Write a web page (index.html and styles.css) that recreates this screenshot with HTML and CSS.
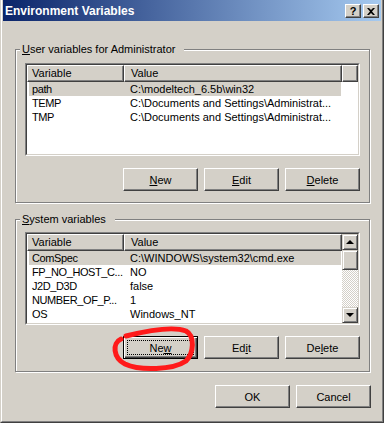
FILE: index.html
```html
<!DOCTYPE html>
<html lang="en">
<head>
    <meta charset="UTF-8">
    <title>Environment Variables</title>
    <link rel="stylesheet" href="styles.css">
</head>
<body>
    <div class="window">
        <div class="frame">
            <div class="titlebar">
                <span class="title">Environment Variables</span>
                <div class="caption-buttons">
                    <div class="cap-btn help">?</div>
                    <div class="cap-btn close">
                        <svg width="8" height="7" viewBox="0 0 8 7"><path d="M0 0h2l2 2 2-2h2l-3 3.5 3 3.5h-2l-2-2-2 2h-2l3-3.5z" fill="#000"/></svg>
                    </div>
                </div>
            </div>

            <div class="client">
                <div class="group group-user">
                    <span class="group-label"><u>U</u>ser variables for Administrator</span>
                    <div class="list">
                        <div class="list-inner">
                            <div class="table">
                                <div class="header">
                                    <div class="hcell col-var">Variable</div>
                                    <div class="hcell col-val">Value</div>
                                    <div class="hcell filler"></div>
                                </div>
                                <div class="row selected"><span class="cell-var">path</span><span class="cell-val">C:\modeltech_6.5b\win32</span></div>
                                <div class="row"><span class="cell-var">TEMP</span><span class="cell-val">C:\Documents and Settings\Administrat...</span></div>
                                <div class="row"><span class="cell-var">TMP</span><span class="cell-val">C:\Documents and Settings\Administrat...</span></div>
                            </div>
                        </div>
                    </div>
                    <div class="buttons">
                        <button class="btn"><u>N</u>ew</button>
                        <button class="btn"><u>E</u>dit</button>
                        <button class="btn"><u>D</u>elete</button>
                    </div>
                </div>

                <div class="group group-system">
                    <span class="group-label"><u>S</u>ystem variables</span>
                    <div class="list">
                        <div class="list-inner">
                            <div class="table">
                                <div class="header">
                                    <div class="hcell col-var">Variable</div>
                                    <div class="hcell col-val">Value</div>
                                </div>
                                <div class="row selected"><span class="cell-var">ComSpec</span><span class="cell-val">C:\WINDOWS\system32\cmd.exe</span></div>
                                <div class="row"><span class="cell-var">FP_NO_HOST_C...</span><span class="cell-val">NO</span></div>
                                <div class="row"><span class="cell-var">J2D_D3D</span><span class="cell-val">false</span></div>
                                <div class="row"><span class="cell-var">NUMBER_OF_P...</span><span class="cell-val">1</span></div>
                                <div class="row"><span class="cell-var">OS</span><span class="cell-val">Windows_NT</span></div>
                                <div class="row"><span class="cell-var">Path</span><span class="cell-val">C:\WINDOWS\system32;C:\WINDOWS;C:\...</span></div>
                            </div>
                            <div class="scrollbar">
                                <div class="sb-btn"><span class="arrow-up"></span></div>
                                <div class="sb-thumb"></div>
                                <div class="sb-track"></div>
                                <div class="sb-btn"><span class="arrow-down"></span></div>
                            </div>
                        </div>
                    </div>
                    <div class="buttons">
                        <button class="btn default"><span class="focus">Ne<u>w</u></span></button>
                        <button class="btn">Ed<u>i</u>t</button>
                        <button class="btn">De<u>l</u>ete</button>
                    </div>
                </div>

                <div class="footer">
                    <button class="btn">OK</button>
                    <button class="btn">Cancel</button>
                </div>
            </div>
        </div>
    </div>

    <!-- red marker drawn around the New button -->
    <svg class="annotation" width="384" height="423" viewBox="0 0 384 423">
        <path d="M126 336 C146 331 173 326 186 331 C195 336 194 353 186 361 C173 370 140 371 125 364 C113 358 112 343 121 339" fill="none" stroke="#ff1a1a" stroke-width="5" stroke-linecap="round"/>
    </svg>
</body>
</html>
```

FILE: styles.css
```css
body {
    margin: 0;
    width: 384px;
    height: 423px;
    overflow: hidden;
    background-color: #d4d0c8;
    font-family: "Liberation Sans", Arial, sans-serif;
    font-size: 11px;
    color: #000;
}

.window {
    height: 423px;
    box-sizing: border-box;
    border-left: 1px solid #d4d0c8;
    border-right: 1px solid #404040;
    border-bottom: 1px solid #404040;
}

.frame {
    height: 100%;
    box-sizing: border-box;
    border-left: 1px solid #fff;
    border-right: 1px solid #808080;
    border-bottom: 1px solid #808080;
    padding: 0 1px 1px 1px;
}

.titlebar {
    height: 21px;
    display: flex;
    align-items: flex-start;
    justify-content: space-between;
    background: linear-gradient(to right, #0a246a, #a6caf0);
}

.title {
    color: #fff;
    font-weight: bold;
    font-size: 12px;
    line-height: 21px;
    padding: 1px 0 0 2px;
}

.caption-buttons {
    display: flex;
    gap: 2px;
    margin: 4px 2px 0 0;
}

.cap-btn {
    width: 16px;
    height: 14px;
    box-sizing: border-box;
    border: 1px solid;
    border-color: #fff #404040 #404040 #fff;
    box-shadow: inset -1px -1px 0 #808080;
    background-color: #d4d0c8;
    display: flex;
    align-items: center;
    justify-content: center;
}

.help {
    font-weight: bold;
    font-size: 11px;
    line-height: 12px;
}

.close svg {
    display: block;
}

.client {
    padding: 28px 11px 0 12px;
}

.group {
    position: relative;
    border: 1px solid #808080;
    box-shadow: 1px 1px 0 #fff, inset 1px 1px 0 #fff;
    padding: 13px 9px 11px 9px;
}

.group-system {
    margin-top: 16px;
    padding-top: 12px;
    padding-bottom: 12px;
}

.group-label {
    position: absolute;
    top: -7px;
    left: 4px;
    padding: 0 9px 0 2px;
    line-height: 13px;
    background-color: #d4d0c8;
}

.list {
    height: 93px;
    box-sizing: border-box;
    border: 1px solid;
    border-color: #808080 #fff #fff #808080;
}

.list-inner {
    height: 100%;
    box-sizing: border-box;
    border: 1px solid;
    border-color: #404040 #d4d0c8 #d4d0c8 #404040;
    background-color: #fff;
    display: flex;
    overflow: hidden;
}

.table {
    flex: 1;
    overflow: hidden;
}

.header {
    display: flex;
    height: 17px;
}

.hcell {
    box-sizing: border-box;
    height: 17px;
    border: 1px solid;
    border-color: #fff #404040 #404040 #fff;
    box-shadow: inset -1px -1px 0 #808080;
    background-color: #d4d0c8;
    line-height: 14px;
    padding-left: 4px;
    white-space: nowrap;
}

.col-var {
    width: 97px;
}

.col-val {
    width: 218px;
    padding-left: 6px;
}

.filler {
    flex: 1;
}

.row {
    display: flex;
    height: 14px;
    line-height: 14px;
    margin-left: 2px;
    width: 312px;
    white-space: nowrap;
}

.row.selected {
    background-color: #d4d0c8;
}

.cell-var {
    width: 95px;
    box-sizing: border-box;
    padding-left: 3px;
    letter-spacing: -0.4px;
    overflow: hidden;
}

.cell-val {
    flex: 1;
    padding-left: 6px;
    overflow: hidden;
}

.scrollbar {
    width: 16px;
    display: flex;
    flex-direction: column;
}

.sb-btn,
.sb-thumb {
    box-sizing: border-box;
    border: 1px solid;
    border-color: #d4d0c8 #404040 #404040 #d4d0c8;
    box-shadow: inset 1px 1px 0 #fff, inset -1px -1px 0 #808080;
    background-color: #d4d0c8;
}

.sb-btn {
    height: 16px;
    display: flex;
    align-items: center;
    justify-content: center;
}

.sb-thumb {
    height: 20px;
}

.sb-track {
    flex: 1;
    background: repeating-conic-gradient(#fff 0 25%, #d4d0c8 0 50%) 0 0 / 2px 2px;
}

.arrow-up,
.arrow-down {
    width: 0;
    height: 0;
    border-left: 4px solid transparent;
    border-right: 4px solid transparent;
}

.arrow-up {
    border-bottom: 4px solid #000;
    margin-top: -1px;
}

.arrow-down {
    border-top: 4px solid #000;
}

.buttons,
.footer {
    display: flex;
    justify-content: flex-end;
    gap: 6px;
}

.buttons {
    margin-top: 12px;
}

.group-system .buttons {
    margin-top: 11px;
}

.footer {
    margin-top: 13px;
    margin-right: -1px;
}

.btn {
    width: 75px;
    height: 23px;
    box-sizing: border-box;
    padding: 0;
    border: 1px solid;
    border-color: #fff #404040 #404040 #fff;
    box-shadow: inset -1px -1px 0 #808080;
    background-color: #d4d0c8;
    font-family: inherit;
    font-size: 11px;
    color: #000;
}

.btn.default {
    border: 1px solid #000;
    box-shadow: inset 1px 1px 0 #fff, inset -1px -1px 0 #404040, inset -2px -2px 0 #808080;
    display: flex;
    padding: 3px;
}

.focus {
    flex: 1;
    display: flex;
    align-items: center;
    justify-content: center;
    border: 1px dotted #000;
}

.annotation {
    position: absolute;
    top: 0;
    left: 0;
    pointer-events: none;
}
```
